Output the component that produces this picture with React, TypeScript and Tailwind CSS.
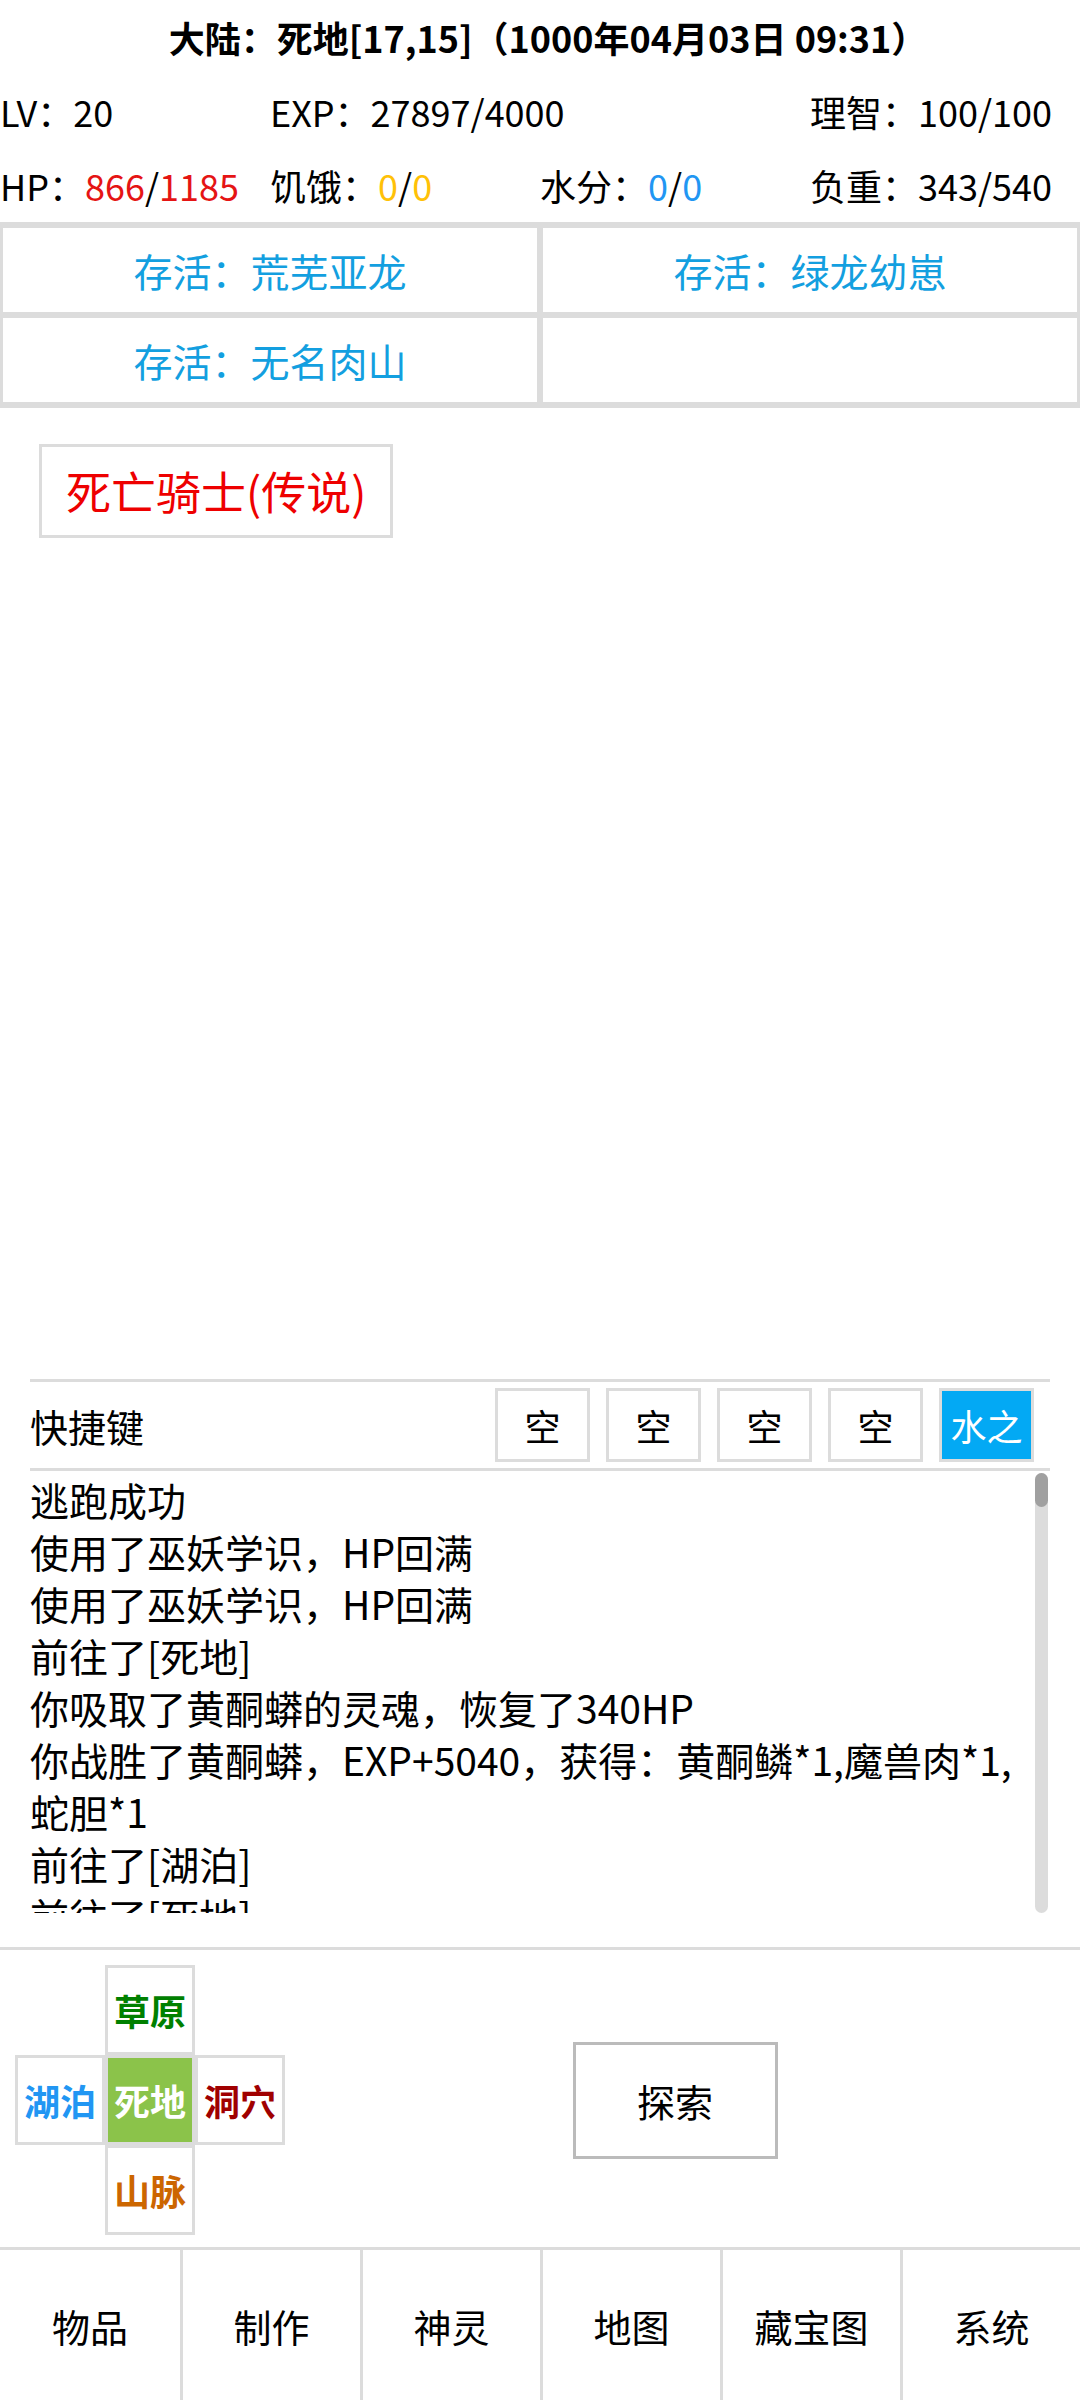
import React from "react";

const logs = [
  "逃跑成功",
  "使用了巫妖学识，HP回满",
  "使用了巫妖学识，HP回满",
  "前往了[死地]",
  "你吸取了黄酮蟒的灵魂，恢复了340HP",
  "你战胜了黄酮蟒，EXP+5040，获得：黄酮鳞*1,魔兽肉*1,\n蛇胆*1",
  "前往了[湖泊]",
  "前往了[死地]",
];

const hotkeys = ["空", "空", "空", "空"];

const navItems = ["物品", "制作", "神灵", "地图", "藏宝图", "系统"];

export default function App() {
  return (
    <div className="w-[1080px] h-[2400px] bg-white text-black flex flex-col font-['Noto_Sans_CJK_SC','Noto_Sans',sans-serif] overflow-hidden">
      {/* header */}
      <div className="h-[74px] pl-[16px] flex items-center justify-center text-[36px] font-bold">
        大陆：死地[17,15]（1000年04月03日 09:31）
      </div>
      <div className="h-[74px] grid grid-cols-4 items-center text-[36px]">
        <div>LV：20</div>
        <div className="col-span-2">EXP：27897/4000</div>
        <div>理智：100/100</div>
      </div>
      <div className="h-[74px] grid grid-cols-4 items-center text-[36px]">
        <div>
          HP：<span className="text-[#e51414]">866</span>/<span className="text-[#e51414]">1185</span>
        </div>
        <div>
          饥饿：<span className="text-[#ffc107]">0</span>/<span className="text-[#ffc107]">0</span>
        </div>
        <div>
          水分：<span className="text-[#2196f3]">0</span>/<span className="text-[#2196f3]">0</span>
        </div>
        <div>负重：343/540</div>
      </div>

      {/* companions */}
      <div className="grid grid-cols-2 border-y-[3px] border-[#dcdcdc] text-[39px] text-[#139fe0]">
        <div className="h-[90px] border-[3px] border-[#dcdcdc] flex items-center justify-center">存活：荒芜亚龙</div>
        <div className="h-[90px] border-[3px] border-[#dcdcdc] flex items-center justify-center">存活：绿龙幼崽</div>
        <div className="h-[90px] border-[3px] border-[#dcdcdc] flex items-center justify-center">存活：无名肉山</div>
        <div className="h-[90px] border-[3px] border-[#dcdcdc]" />
      </div>

      <div className="pt-[36px] pl-[39px]">
        <button className="h-[94px] px-[24px] border-[3px] border-[#dcdcdc] text-[45px] text-[#ee0000] flex items-center">
          死亡骑士(传说)
        </button>
      </div>

      <div className="flex-1" />

      {/* hotkeys + log */}
      <div className="mx-[30px] border-t-[3px] border-[#dcdcdc]">
        <div className="h-[89px] flex items-center justify-between border-b-[3px] border-[#dcdcdc]">
          <span className="text-[38px]">快捷键</span>
          <div className="flex gap-[16px] mr-[16px]">
            {hotkeys.map((k, i) => (
              <button key={i} className="w-[95px] h-[74px] border-[3px] border-[#dcdcdc] text-[36px] flex items-center justify-center">
                {k}
              </button>
            ))}
            <button className="w-[95px] h-[74px] border-[3px] border-[#dcdcdc] bg-[#03a9f4] text-white text-[36px] flex items-center justify-center">
              水之
            </button>
          </div>
        </div>
        <div className="relative h-[442px] overflow-hidden">
          <div className="pt-[2px] pr-[20px] text-[39px] leading-[52px] whitespace-pre-line">
            {logs.map((l, i) => (
              <div key={i}>{l}</div>
            ))}
          </div>
          <div className="absolute right-[2px] top-[2px] bottom-0 w-[13px] bg-[#dcdcdc] rounded-full">
            <div className="h-[34px] w-full bg-[#a0a0a0] rounded-full" />
          </div>
        </div>
      </div>

      {/* controls */}
      <div className="mt-[34px] border-t-[3px] border-[#dcdcdc] flex pt-[15px] pb-[12px]">
        <div className="ml-[15px] grid grid-cols-[90px_90px_90px] grid-rows-[90px_90px_90px] text-[36px] font-bold">
          <div />
          <div className="border-[3px] border-[#dcdcdc] flex items-center justify-center text-[#008000]">草原</div>
          <div />
          <div className="border-[3px] border-[#dcdcdc] flex items-center justify-center text-[#2196f3]">湖泊</div>
          <div className="border-[3px] border-[#dcdcdc] bg-[#8bc34a] flex items-center justify-center text-white">死地</div>
          <div className="border-[3px] border-[#dcdcdc] flex items-center justify-center text-[#a00000]">洞穴</div>
          <div />
          <div className="border-[3px] border-[#dcdcdc] flex items-center justify-center text-[#cc6600]">山脉</div>
          <div />
        </div>
        <div className="flex-1 pr-[15px] flex items-center justify-center">
          <button className="w-[205px] h-[117px] border-[3px] border-[#bbbbbb] text-[38px] flex items-center justify-center">
            探索
          </button>
        </div>
      </div>

      {/* bottom nav */}
      <div className="h-[153px] border-t-[3px] border-[#dcdcdc] grid grid-cols-6">
        {navItems.map((n, i) => (
          <div
            key={n}
            className={i === 0 ? "flex items-center justify-center text-[38px]" : "flex items-center justify-center text-[38px] border-l-[3px] border-[#dcdcdc]"}
          >
            {n}
          </div>
        ))}
      </div>
    </div>
  );
}
